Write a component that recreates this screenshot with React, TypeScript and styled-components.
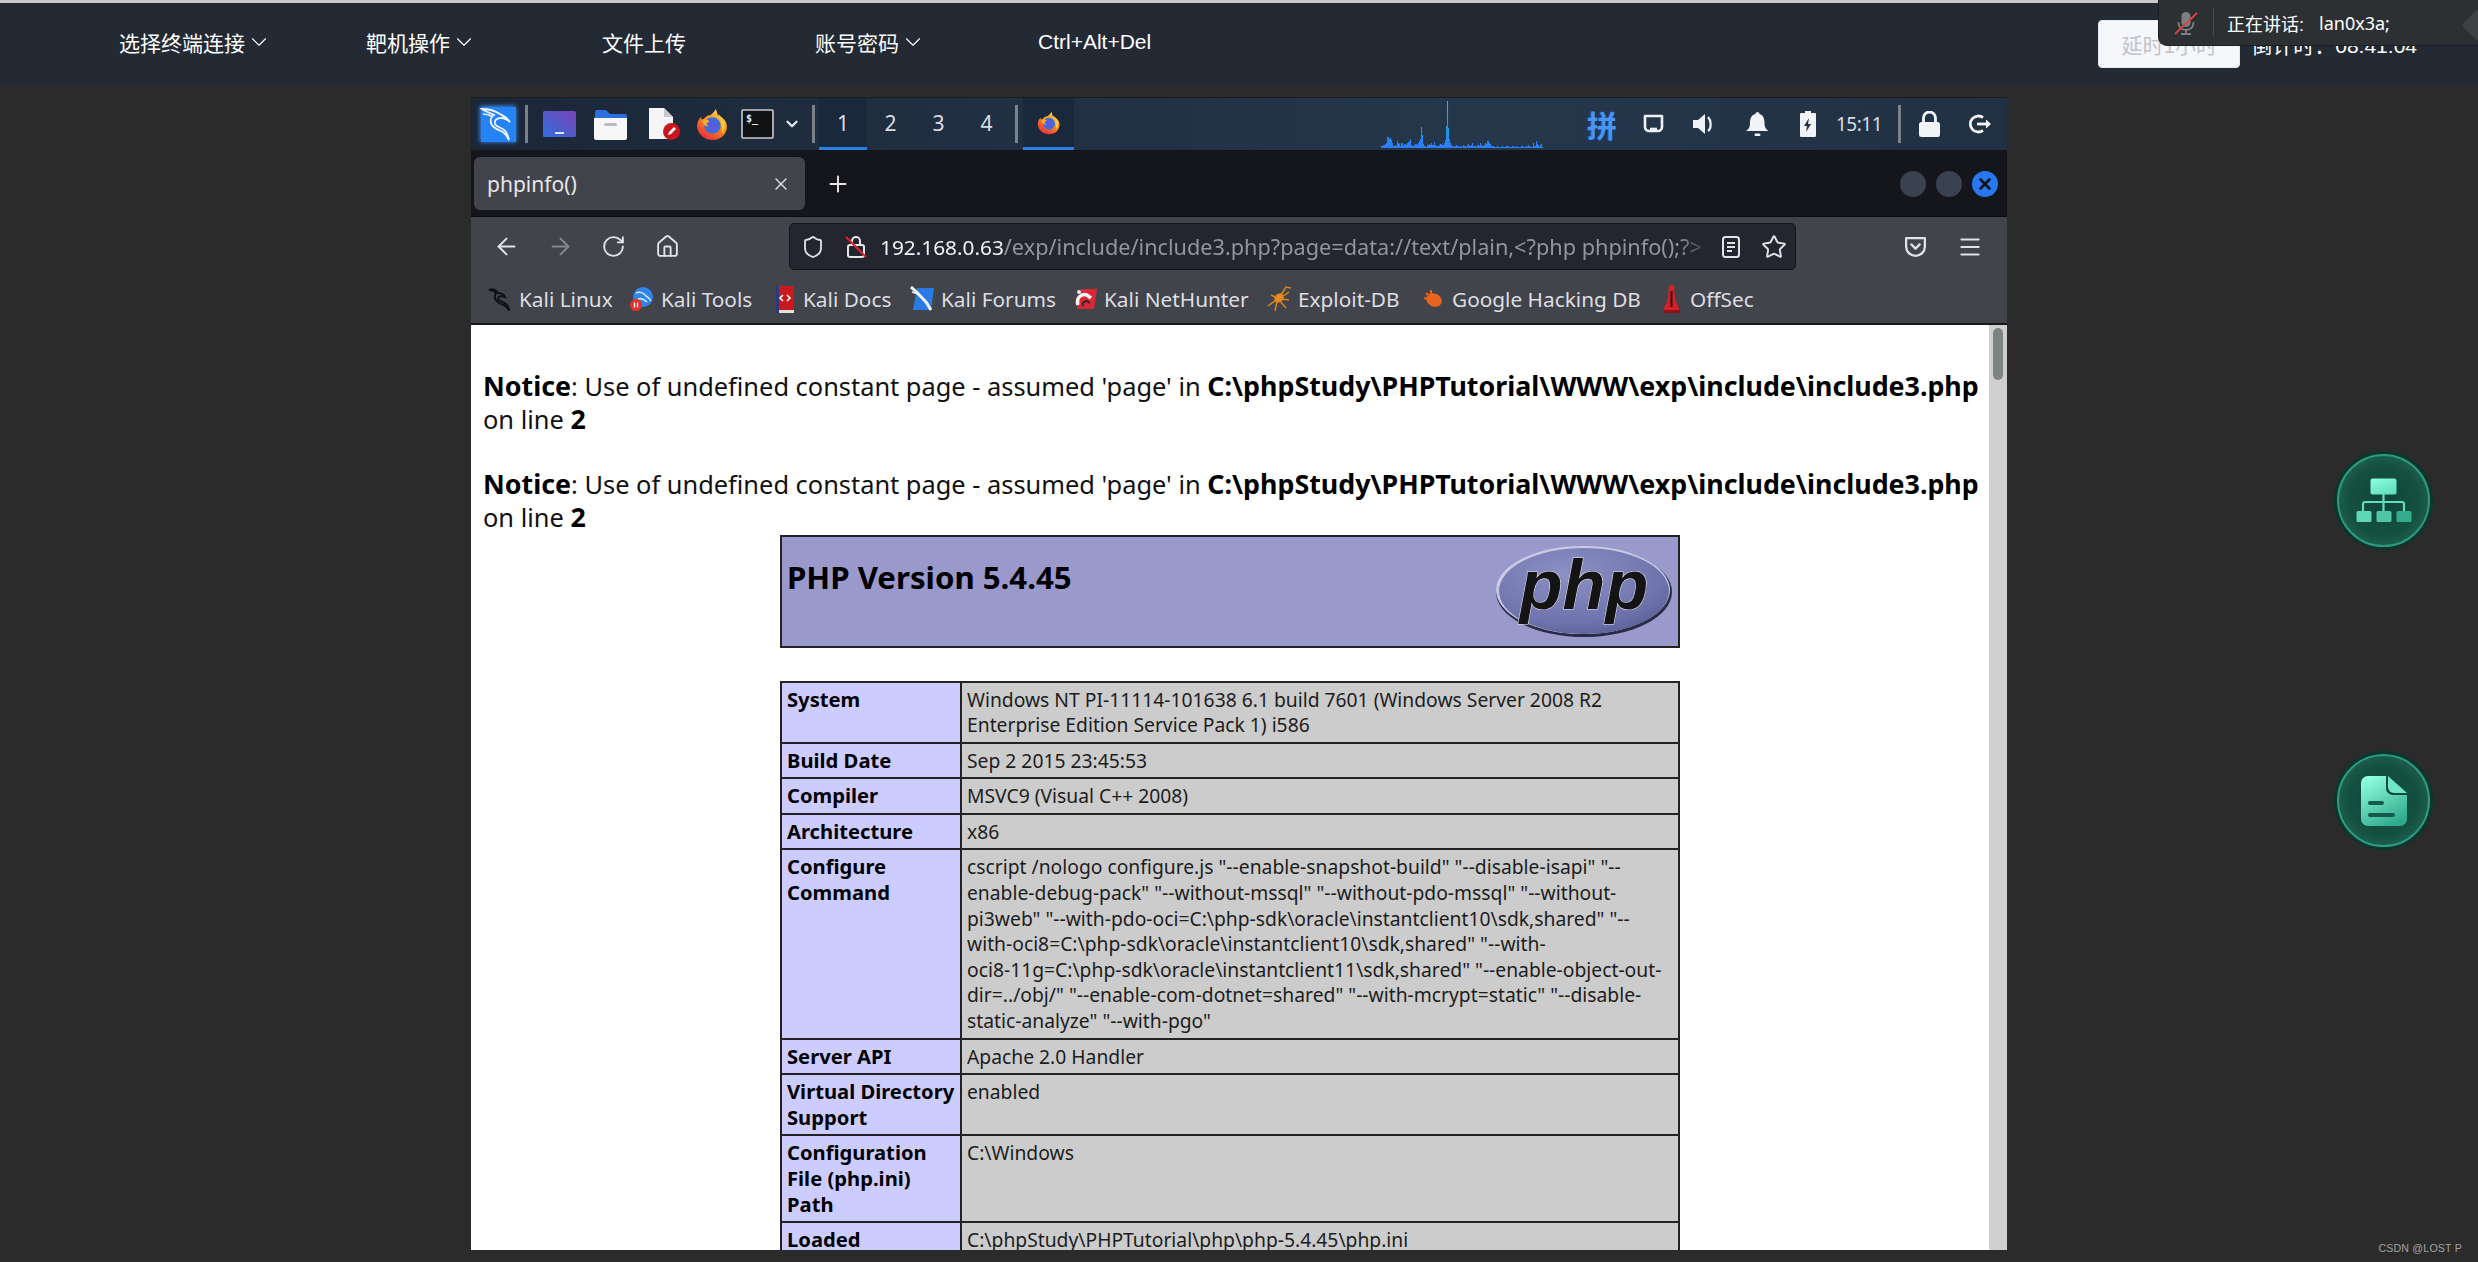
import React from "react";
import styled, { createGlobalStyle } from "styled-components";
import { ArrowLeft, ArrowRight, RotateCw, Home, Shield, Star, Menu, X, Plus, ChevronDown } from "lucide-react";

const UI = `"Noto Sans", "Noto Sans CJK SC", sans-serif`;
const CN = `"Liberation Sans", "Noto Sans CJK SC", sans-serif`;

const Global = createGlobalStyle`
  html, body { margin: 0; padding: 0; background: #2b2b2b; width: 2478px; height: 1262px; overflow: hidden; }
  * { box-sizing: border-box; }
`;

const Screen = styled.div`
  position: relative;
  width: 2478px;
  height: 1262px;
  background: #2b2b2b;
  overflow: hidden;
  font-family: ${UI};
`;

/* ---------- remote console bar ---------- */
const ConsoleBar = styled.header`
  height: 85px;
  background: #232a34;
  border-top: 3px solid #c9c9c9;
  display: flex;
  align-items: center;
  padding: 0 61px 0 119px;
  color: #fff;
  font-family: ${CN};
  font-size: 21px;
`;
const ConsoleItem = styled.div<{ $w: number }>`
  width: ${(p) => p.$w}px;
  display: flex;
  align-items: center;
  gap: 1px;
  white-space: nowrap;
  margin-top: -5px;
`;
const ConsoleRight = styled.div`
  margin-left: auto;
  display: flex;
  align-items: center;
  gap: 11px;
`;
const ExtendButton = styled.div`
  width: 142px;
  height: 48px;
  background: #f5f7fa;
  border: 1px solid #e4e7ed;
  border-radius: 4px;
  color: #c0c4cc;
  display: flex;
  align-items: center;
  justify-content: center;
  white-space: nowrap;
`;
const Countdown = styled.div`
  white-space: nowrap;
`;
const Toast = styled.aside`
  position: absolute;
  top: 0;
  right: 0;
  width: 320px;
  height: 46px;
  background: #2d3033;
  border-bottom: 1px solid #1c1e20;
  border-left: 1px solid #1c1e20;
  border-bottom-left-radius: 9px;
  display: flex;
  align-items: center;
  padding-left: 14px;
  overflow: hidden;
  color: #fff;
  font-family: ${CN};
  font-size: 18px;
  white-space: nowrap;
`;
const ToastDivider = styled.div`
  width: 1px;
  height: 29px;
  background: #45484b;
  margin: 0 13px 0 14px;
`;
const ToastName = styled.span`
  margin-left: 15px;
  font-family: "Noto Sans", sans-serif;
`;
const ToastDiamond = styled.div`
  position: absolute;
  right: -10px;
  top: 14px;
  width: 22px;
  height: 22px;
  background: #3e4144;
  border-radius: 3px;
  transform: rotate(45deg);
`;

/* ---------- remote desktop ---------- */
const RemoteRow = styled.main`
  padding: 12px 0 0 471px;
`;
const Remote = styled.section`
  width: 1536px;
  height: 1153px;
  display: flex;
  flex-direction: column;
  overflow: hidden;
  background: #fff;
`;

const Panel = styled.div`
  height: 53px;
  flex: none;
  background: linear-gradient(90deg, #1b2737 0%, #223245 45%, #25374b 65%, #213144 100%);
  border-top: 1px solid #1a1d22;
  display: flex;
  align-items: center;
  color: #e8ecf2;
`;
const PanelSlot = styled.div<{ $w: number }>`
  width: ${(p) => p.$w}px;
  height: 100%;
  flex: none;
  display: flex;
  align-items: center;
  justify-content: center;
`;
const PanelSep = styled.div<{ $mx?: number }>`
  width: 3px;
  height: 38px;
  flex: none;
  background: #8a9097;
  margin: 0 ${(p) => p.$mx ?? 4}px;
  opacity: 0.85;
`;
const Workspace = styled.div<{ $w: number; $active?: boolean }>`
  width: ${(p) => p.$w}px;
  height: 100%;
  flex: none;
  display: flex;
  align-items: center;
  justify-content: center;
  font-size: 21px;
  color: #d8dde4;
  background: ${(p) => (p.$active ? "#19283a" : "transparent")};
  border-bottom: 3px solid ${(p) => (p.$active ? "#2b7fe8" : "transparent")};
`;
const Clock = styled.div`
  width: 56px;
  flex: none;
  font-size: 19px;
  color: #d6dce4;
  letter-spacing: -0.5px;
  text-align: left;
`;
const Pinyin = styled.div`
  font-family: "Noto Sans CJK SC", sans-serif;
  font-weight: 700;
  font-size: 30px;
  line-height: 1;
  color: #4a96ee;
  text-shadow: 1px 1px 0 #123a80, -1px 0 0 #1c4e9e;
`;

/* ---------- firefox ---------- */
const TabBar = styled.div`
  height: 67px;
  flex: none;
  background: #15161b;
  display: flex;
  align-items: flex-start;
  padding: 7px 0 0 3px;
  border-bottom: 1px solid #0c0d10;
`;
const Tab = styled.div`
  width: 331px;
  height: 53px;
  background: #42444c;
  border-radius: 6px;
  display: flex;
  align-items: center;
  justify-content: space-between;
  padding: 0 14px 0 13px;
  color: #e6e6e8;
  font-size: 21px;
`;
const TabPlus = styled.div`
  width: 66px;
  height: 53px;
  display: flex;
  align-items: center;
  justify-content: center;
  color: #e6e6e8;
`;
const WindowButtons = styled.div`
  margin-left: auto;
  height: 53px;
  display: flex;
  align-items: center;
  gap: 10px;
  padding-right: 9px;
`;
const WindowDot = styled.div<{ $close?: boolean }>`
  width: 26px;
  height: 26px;
  border-radius: 50%;
  background: ${(p) => (p.$close ? "#2777f0" : "#3a4252")};
  display: flex;
  align-items: center;
  justify-content: center;
  color: #10141c;
`;
const NavBar = styled.div`
  height: 55px;
  flex: none;
  background: #42444c;
  display: flex;
  align-items: center;
  padding: 4px 0 0 9px;
  color: #e2e2e6;
`;
const NavBtn = styled.div<{ $w?: number; $dim?: boolean; $ml?: number }>`
  width: ${(p) => p.$w ?? 53.5}px;
  margin-left: ${(p) => p.$ml ?? 0}px;
  flex: none;
  display: flex;
  align-items: center;
  justify-content: center;
  color: ${(p) => (p.$dim ? "#85878d" : "#e2e2e6")};
`;
const UrlBar = styled.div`
  width: 1007px;
  height: 47px;
  margin-left: 95px;
  background: #23252f;
  border: 1px solid #14151a;
  border-radius: 5px;
  display: flex;
  align-items: center;
  padding-left: 4px;
  flex: none;
`;
const UrlText = styled.div`
  width: 832px;
  flex: none;
  overflow: hidden;
  white-space: nowrap;
  font-size: 21.7px;
  color: #93959d;
  -webkit-mask-image: linear-gradient(90deg, #000 96%, transparent 100%);
  mask-image: linear-gradient(90deg, #000 96%, transparent 100%);
`;
const UrlHost = styled.span`
  font-size: 20.8px;
  color: #f2f2f4;
`;
const BookmarkBar = styled.div`
  height: 53px;
  flex: none;
  background: #42444c;
  border-bottom: 2px solid #17181c;
  display: flex;
  align-items: center;
  padding: 3px 0 0 17px;
`;
const Bookmark = styled.div<{ $w: number }>`
  width: ${(p) => p.$w}px;
  flex: none;
  display: flex;
  align-items: center;
  color: #dedee2;
  font-size: 20.8px;
  white-space: nowrap;
`;
const BookmarkIcon = styled.span<{ $w: number }>`
  width: ${(p) => p.$w}px;
  flex: none;
  display: flex;
  align-items: center;
`;

/* ---------- page ---------- */
const PageRow = styled.div`
  flex: 1;
  min-height: 0;
  display: flex;
  background: #fff;
`;
const PageBody = styled.div`
  flex: 1;
  min-width: 0;
  overflow: hidden;
  padding: 45px 5px 0 12px;
  color: #111;
  font-size: 25.4px;
  line-height: 32.7px;
`;
const Notice = styled.div<{ $gap?: boolean }>`
  margin-bottom: ${(p) => (p.$gap ? 32.7 : 0)}px;
  b { color: #000; font-weight: 700; font-size: 26.8px; line-height: 1; }
`;
const InfoTable = styled.table`
  width: 900px;
  margin: 0 0 0 297px;
  border-collapse: collapse;
  table-layout: fixed;
  font-size: 19.3px;
  line-height: 25.6px;
`;
const HeaderTable = styled(InfoTable)`
  margin-bottom: 33px;
  margin-top: 1px;
`;
const HeaderCell = styled.td`
  height: 111px;
  background: #9999cc;
  border: 2px solid #222;
  padding: 4px 5px;
  vertical-align: top;
`;
const HeaderInner = styled.div`
  position: relative;
  height: 100%;
`;
const Title = styled.h1`
  margin: 0;
  padding-top: 18px;
  font-size: 31.2px;
  line-height: 36px;
  font-weight: 700;
  color: #000;
`;
const PhpLogo = styled.svg`
  position: absolute;
  right: 0;
  top: 3px;
`;
const LabelCell = styled.td`
  width: 180px;
  background: #ccccff;
  border: 2px solid #222;
  padding: 4px 5px;
  font-size: 20.2px;
  font-weight: 700;
  color: #000;
  vertical-align: top;
  white-space: pre-line;
`;
const ValueCell = styled.td`
  background: #cccccc;
  border: 2px solid #222;
  padding: 4px 5px;
  color: #1c1c1c;
  vertical-align: top;
  white-space: pre-line;
`;
const ScrollTrack = styled.div`
  width: 18px;
  flex: none;
  background: #cfcfcf;
  padding: 3px 4px 0;
`;
const ScrollThumb = styled.div`
  height: 52px;
  background: #7e8484;
  border-radius: 5px;
`;

/* ---------- overlays ---------- */
const FloatButton = styled.div<{ $top: number }>`
  position: absolute;
  left: 2337px;
  top: ${(p) => p.$top}px;
  width: 93px;
  height: 93px;
  border-radius: 50%;
  background: radial-gradient(circle at 50% 50%, #0f4438 0%, #14503f 55%, #2a6e5c 95%);
  border: 2px solid #2b9a80;
  box-shadow: 0 0 0 3px #0a362b;
  display: flex;
  align-items: center;
  justify-content: center;
`;
const Watermark = styled.div`
  position: absolute;
  right: 16px;
  bottom: 8px;
  font-family: "Liberation Sans", sans-serif;
  font-size: 10.6px;
  color: #a3a3a3;
  letter-spacing: 0.2px;
`;

/* ---------- drawings ---------- */
const Firefox = ({ s }: { s: number }) => (
  <svg width={s} height={s} viewBox="0 0 32 32">
    <defs>
      <linearGradient id="ffa" x1="0.8" y1="0" x2="0.2" y2="1">
        <stop offset="0" stopColor="#ffe14a" />
        <stop offset="0.45" stopColor="#ff8a1e" />
        <stop offset="1" stopColor="#e5273f" />
      </linearGradient>
    </defs>
    <path d="M19 1c2 3 1 5 3 7 4 1 8 5 8 10 0 8-6 13-14 13S2 26 1 18c0-4 2-8 4-9 0 2 1 3 2 3 1-3 4-5 7-5 2-2 4-3 5-6z" fill="url(#ffa)" />
    <circle cx="16" cy="17" r="8" fill="#3a6fe0" />
    <circle cx="16" cy="17" r="5" fill="#6f4fd8" opacity=".55" />
    <path d="M6 11c3 0 5 0 7 2l-3 2 2 3c-3 0-6-2-6-7z" fill="#ffb02a" />
    <path d="M21 6c4 2 7 6 7 11 0 3-1 6-3 8 1-7-1-14-4-19z" fill="#ffc83a" />
  </svg>
);
const KaliLogo = () => (
  <svg width="46" height="46" viewBox="0 0 46 46">
    <defs>
      <filter id="kglow" x="-30%" y="-30%" width="160%" height="160%"><feGaussianBlur stdDeviation="2.2" /></filter>
    </defs>
    <rect x="5" y="5" width="36" height="36" rx="1" fill="#3f8cff" filter="url(#kglow)" />
    <rect x="6" y="6" width="35" height="35" fill="#2683f6" />
    <path d="M7 8c6 0 12 1 18 5 3 2 7 3 10 8-3-3-6-4-9-4-4 0-7 2-6 6 1 3 6 3 9 6 3 2 4 6 5 10-2-4-4-7-8-9-4-2-9-3-10-8-1-4 1-7 3-8-3-2-8-3-12-6z" fill="none" stroke="#f2f7ff" strokeWidth="1.8" />
    <path d="M8 13c4 0 7 1 10 3" fill="none" stroke="#f2f7ff" strokeWidth="1.6" />
  </svg>
);
const ScreenIcon = () => (
  <svg width="33" height="26" viewBox="0 0 33 26">
    <defs>
      <linearGradient id="scr" x1="0" y1="1" x2="1" y2="0">
        <stop offset="0" stopColor="#2f6fe0" />
        <stop offset="1" stopColor="#7a43b4" />
      </linearGradient>
    </defs>
    <rect width="33" height="26" rx="1.5" fill="url(#scr)" />
    <rect x="12" y="21" width="9" height="2" fill="#e0e6f4" />
  </svg>
);
const FolderIcon = () => (
  <svg width="33" height="31" viewBox="0 0 33 31">
    <path d="M1 3a2 2 0 0 1 2-2h9l4 4h15a2 2 0 0 1 2 2v6H1z" fill="#2a70dc" />
    <path d="M0 9h33v20a2 2 0 0 1-2 2H2a2 2 0 0 1-2-2z" fill="#f6f6f7" />
    <rect x="10" y="14" width="13" height="3" rx="1.5" fill="#b8bcc4" />
  </svg>
);
const FileIcon = () => (
  <svg width="32" height="33" viewBox="0 0 32 33">
    <path d="M1 0h15l9 9v22H1z" fill="#f5f5f6" />
    <path d="M16 0l9 9h-9z" fill="#c6c8cc" />
    <circle cx="23.5" cy="23.5" r="8.5" fill="#c9171e" />
    <path d="M20 27l1-3 5-5 2 2-5 5z" fill="#fff" />
  </svg>
);
const TerminalIcon = () => (
  <svg width="33" height="30" viewBox="0 0 33 30">
    <rect x="1" y="1" width="31" height="28" rx="1" fill="#111214" stroke="#c9ccd2" strokeWidth="1.6" />
    <text x="5" y="13" fontFamily="DejaVu Sans Mono, monospace" fontSize="10" fontWeight="700" fill="#e8e8e8">$_</text>
  </svg>
);
const Spectrum = () => {
  const h = [2,2,3,3,4,5,11,11,9,10,8,5,2,2,3,2,7,5,4,2,5,5,2,4,4,3,5,6,7,9,3,2,2,3,4,4,3,5,7,9,21,13,4,2,2,1,3,3,4,3,5,3,3,6,3,2,2,2,3,4,4,3,3,5,8,22,47,20,9,5,3,2,2,1,2,3,2,2,1,2,2,1,3,2,2,1,3,4,2,2,3,5,2,2,2,1,3,3,2,5,3,2,2,3,5,4,7,7,5,4,2,2,2,1,1,1,2,1,1,1,1,2,1,1,1,2,2,2,1,1,1,2,2,1,1,2,1,1,1,1,2,2,1,1,2,1,2,3,2,1,1,1,5,2,2,7,4,3,1,3,4,1];
  return (
    <svg width="191" height="47" viewBox="0 0 191 47">
      <defs>
        <linearGradient id="spec" x1="0" y1="0" x2="0" y2="47" gradientUnits="userSpaceOnUse">
          <stop offset="0" stopColor="#12cdbb" />
          <stop offset="0.5" stopColor="#14a4d8" />
          <stop offset="0.8" stopColor="#2187f5" />
          <stop offset="1" stopColor="#2f7cff" />
        </linearGradient>
      </defs>
      {h.map((v, i) => (
        <rect key={i} x={i} y={47 - v} width="1.05" height={v} fill="url(#spec)" />
      ))}
    </svg>
  );
};
const PocketIcon = ({ c = "#eef1f5", s = 24 }: { c?: string; s?: number }) => (
  <svg width={s} height={s} viewBox="0 0 24 24" fill="none" stroke={c} strokeWidth="2.2">
    <path d="M3 4h18v8a9 9 0 0 1-18 0z" strokeLinejoin="round" />
    <path d="M8 10l4 4 4-4" strokeLinecap="round" strokeLinejoin="round" />
  </svg>
);
const MutedMic = () => (
  <svg width="26" height="26" viewBox="0 0 26 26">
    <rect x="8.500" y="2" width="9" height="15" rx="4.500" fill="#7d8083" />
    <path d="M5.500 12c0 5 3 8 7.500 8s7.500-3 7.500-8" fill="none" stroke="#7d8083" strokeWidth="1.800" />
    <path d="M13 20v3M8 24h10" stroke="#7d8083" strokeWidth="1.800" />
    <path d="M2 24L24 3" stroke="#d8433c" strokeWidth="1.800" />
  </svg>
);
const EthernetIcon = () => (
  <svg width="21" height="20" viewBox="0 0 21 20" fill="none" stroke="#eef1f5" strokeWidth="2.6">
    <path d="M2 2h17v11a4 4 0 0 1-4 4H6a4 4 0 0 1-4-4z" strokeLinejoin="round" />
    <path d="M7 15h7" />
  </svg>
);
const SpeakerIcon = () => (
  <svg width="24" height="24" viewBox="0 0 24 24">
    <path d="M1 8h5l7-6v20l-7-6H1z" fill="#eef1f5" />
    <path d="M16 5c3 3 4 11 0 14" fill="none" stroke="#eef1f5" strokeWidth="2.2" />
  </svg>
);
const BellIcon = () => (
  <svg width="23" height="26" viewBox="0 0 23 26">
    <path d="M11.500 1c1.200 0 2 1 2 2 4 1 5 5 5 9 0 4 1 6 4 8H0c3-2 4-4 4-8 0-4 1-8 5.500-9 0-1 .8-2 2-2z" fill="#f2f4f7" />
    <rect x="8.500" y="22.500" width="6" height="2.500" rx="1.200" fill="#f2f4f7" />
  </svg>
);
const BatteryIcon = () => (
  <svg width="16" height="26" viewBox="0 0 16 26">
    <path d="M5 0h6v2h4a1 1 0 0 1 1 1v22a1 1 0 0 1-1 1H1a1 1 0 0 1-1-1V3a1 1 0 0 1 1-1h4z" fill="#f2f4f7" />
    <path d="M9 7l-5 8h3l-1 6 5-8H8z" fill="#1f2e40" />
  </svg>
);
const PadlockIcon = () => (
  <svg width="21" height="26" viewBox="0 0 21 26">
    <path d="M4.500 12V7a6 6 0 0 1 12 0v5" fill="none" stroke="#f2f4f7" strokeWidth="2.800" />
    <rect y="11" width="21" height="15" rx="2.500" fill="#f2f4f7" />
  </svg>
);
const LogoutIcon = () => (
  <svg width="24" height="22" viewBox="0 0 24 22" fill="none" stroke="#f2f4f7" strokeWidth="2.800">
    <path d="M15 4.500a8 8 0 1 0 0 13" />
    <path d="M9 11h11" />
    <path d="M18 6.500l5 4.500-5 4.500z" fill="#f2f4f7" stroke="none" />
  </svg>
);
const InsecureLock = () => (
  <svg width="24" height="26" viewBox="0 0 24 26" fill="none">
    <path d="M8 11V7a4 4 0 0 1 8 0v4" stroke="#e6e6ea" strokeWidth="2" />
    <rect x="4" y="11" width="16" height="12" rx="2" stroke="#e6e6ea" strokeWidth="2" />
    <path d="M2 3l20 20" stroke="#e0222e" strokeWidth="2" />
  </svg>
);
const ReaderIcon = () => (
  <svg width="20" height="24" viewBox="0 0 20 24" fill="none" stroke="#e2e2e6" strokeWidth="2">
    <rect x="2" y="2" width="16" height="20" rx="2.500" />
    <path d="M6 8h8M6 12h8M6 16h5" />
  </svg>
);
const DragonBm = () => (
  <svg width="25" height="24" viewBox="0 0 25 24" fill="none" stroke="#101114" strokeWidth="2">
    <path d="M1 3c4-2 7 0 9 3 3 0 6 2 7 4-3-1-6-1-7 1-1 3 5 3 8 6 2 2 3 4 3 6-2-3-4-5-8-6-4-2-7-4-6-8 0-2 1-3 2-3-2-2-5-3-8-3z" />
  </svg>
);
const ToolsBm = () => (
  <svg width="23" height="26" viewBox="0 0 23 26">
    <circle cx="13" cy="11" r="10" fill="#2f86ea" />
    <path d="M6 7c4-2 8 0 10 3 2 1 4 3 5 5M8 13c3-1 6 0 9 3" stroke="#dbe9fb" strokeWidth="1.500" fill="none" />
    <circle cx="6" cy="19" r="6" fill="#e8302c" />
    <path d="M4.500 16.500v5M7.500 16.500v5" stroke="#fff" strokeWidth="1.300" />
  </svg>
);
const DocsBm = () => (
  <svg width="20" height="27" viewBox="0 0 20 27">
    <rect x="1" y="0" width="18" height="25" fill="#c9191e" />
    <rect x="1" y="24" width="18" height="3" fill="#e8e0d8" />
    <rect x="1" y="0" width="3" height="27" fill="#2a3a7a" />
    <path d="M8 9l-3 3 3 3M12 9l3 3-3 3" stroke="#fff" strokeWidth="1.600" fill="none" />
  </svg>
);
const ForumsBm = () => (
  <svg width="24" height="26" viewBox="0 0 24 26">
    <path d="M7 2h17l-3 22H3z" fill="#2b7be4" />
    <path d="M1 1c5 4 10 10 15 15l5 8" stroke="#f1f3f6" strokeWidth="3" fill="none" />
    <path d="M2 6l6 2" stroke="#f1f3f6" strokeWidth="1.500" />
  </svg>
);
const HunterBm = () => (
  <svg width="24" height="24" viewBox="0 0 24 24">
    <path d="M8 2h16l-3 20H4z" fill="#d92936" />
    <path d="M5 18c-2-7 3-12 9-10l4 3" stroke="#f3f3f3" strokeWidth="3.500" fill="none" />
    <path d="M10 19c-1-3 1-5 4-5l3 2" stroke="#2a2a2f" strokeWidth="2" fill="none" />
    <circle cx="6" cy="5" r="2" fill="#e9e9ea" />
  </svg>
);
const SpiderBm = () => (
  <svg width="25" height="26" viewBox="0 0 25 26" fill="none" stroke="#d98520" strokeWidth="1.500">
    <ellipse cx="12" cy="12" rx="4.500" ry="3.500" fill="#e88e22" transform="rotate(-40 12 12)" />
    <path d="M14 9L19 1l5 1M15 11l7-5M15 13l7 1M13 15l6 7M10 15L8 25M9 14L1 20M8 11L4 9" />
  </svg>
);
const BugBm = () => (
  <svg width="20" height="20" viewBox="0 0 20 20">
    <ellipse cx="11" cy="11" rx="8" ry="6.500" fill="#e8641e" transform="rotate(25 11 11)" />
    <path d="M3 4l4 3M8 1v5M1 9l4 1" stroke="#e8641e" strokeWidth="2" />
  </svg>
);
const OffSecBm = () => (
  <svg width="19" height="28" viewBox="0 0 19 28">
    <path d="M7 0h5l1 14 5 12H1l5-12z" fill="#d71f25" />
    <path d="M9.500 6v16" stroke="#2a1012" strokeWidth="2" />
    <rect x="1" y="25" width="17" height="3" fill="#8f1318" />
  </svg>
);
const NetIcon = () => (
  <svg width="56" height="46" viewBox="0 0 56 46">
    <defs>
      <linearGradient id="g1" x1="0" y1="0" x2="0.7" y2="1">
        <stop offset="0" stopColor="#8fffe0" />
        <stop offset="1" stopColor="#5fe0bf" />
      </linearGradient>
    </defs>
    <rect x="14.500" y="0.500" width="26" height="16" rx="2" fill="url(#g1)" />
    <path d="M27.500 16v19M7 35v-9a2 2 0 0 1 2-2h37a2 2 0 0 1 2 2v9" fill="none" stroke="#63dcbb" strokeWidth="2.200" />
    <rect x="0.500" y="33" width="15" height="11" rx="1.500" fill="#5fd7b7" />
    <rect x="20.500" y="33" width="15" height="11" rx="1.500" fill="#4fc6a7" />
    <rect x="40.500" y="33" width="15" height="11" rx="1.500" fill="#35ac8d" />
  </svg>
);
const DocIcon = () => (
  <svg width="46" height="50" viewBox="0 0 46 50">
    <defs>
      <linearGradient id="g2" x1="0.2" y1="0" x2="0.7" y2="1">
        <stop offset="0" stopColor="#8fffe0" />
        <stop offset="1" stopColor="#2fa98a" />
      </linearGradient>
    </defs>
    <path d="M7 0h18v12a7 7 0 0 0 7 7h14v24a7 7 0 0 1-7 7H7a7 7 0 0 1-7-7V7a7 7 0 0 1 7-7z" fill="url(#g2)" />
    <path d="M27 0l19 17H33a6 6 0 0 1-6-6z" fill="#6fe8c8" />
    <rect x="7" y="25" width="16" height="4" rx="2" fill="#155a49" />
    <rect x="7" y="37" width="27" height="4" rx="2" fill="#155a49" />
  </svg>
);

const rows: [string, string][] = [
  ["System", "Windows NT PI-11114-101638 6.1 build 7601 (Windows Server 2008 R2\nEnterprise Edition Service Pack 1) i586"],
  ["Build Date", "Sep 2 2015 23:45:53"],
  ["Compiler", "MSVC9 (Visual C++ 2008)"],
  ["Architecture", "x86"],
  ["Configure\nCommand", `cscript /nologo configure.js "--enable-snapshot-build" "--disable-isapi" "--\nenable-debug-pack" "--without-mssql" "--without-pdo-mssql" "--without-\npi3web" "--with-pdo-oci=C:\\php-sdk\\oracle\\instantclient10\\sdk,shared" "--\nwith-oci8=C:\\php-sdk\\oracle\\instantclient10\\sdk,shared" "--with-\noci8-11g=C:\\php-sdk\\oracle\\instantclient11\\sdk,shared" "--enable-object-out-\ndir=../obj/" "--enable-com-dotnet=shared" "--with-mcrypt=static" "--disable-\nstatic-analyze" "--with-pgo"`],
  ["Server API", "Apache 2.0 Handler"],
  ["Virtual Directory\nSupport", "enabled"],
  ["Configuration\nFile (php.ini)\nPath", "C:\\Windows"],
  ["Loaded\nConfiguration\nFile", "C:\\phpStudy\\PHPTutorial\\php\\php-5.4.45\\php.ini"],
];

const path = "C:\\phpStudy\\PHPTutorial\\WWW\\exp\\include\\include3.php";

const bookmarks: [React.ReactNode, string, number, number][] = [
  [<DragonBm />, "Kali Linux", 142, 31],
  [<ToolsBm />, "Kali Tools", 145, 31],
  [<DocsBm />, "Kali Docs", 135, 28],
  [<ForumsBm />, "Kali Forums", 163, 31],
  [<HunterBm />, "Kali NetHunter", 194, 31],
  [<SpiderBm />, "Exploit-DB", 156, 31],
  [<BugBm />, "Google Hacking DB", 239, 29],
  [<OffSecBm />, "OffSec", 100, 28],
];

export default function App() {
  return (
    <Screen>
      <Global />
      <ConsoleBar>
        <ConsoleItem $w={247}>选择终端连接<ChevronDown size={26} strokeWidth={1} /></ConsoleItem>
        <ConsoleItem $w={236}>靶机操作<ChevronDown size={26} strokeWidth={1} /></ConsoleItem>
        <ConsoleItem $w={213}>文件上传</ConsoleItem>
        <ConsoleItem $w={223}>账号密码<ChevronDown size={26} strokeWidth={1} /></ConsoleItem>
        <ConsoleItem $w={120}>Ctrl+Alt+Del</ConsoleItem>
        <ConsoleRight>
          <ExtendButton>延时1小时</ExtendButton>
          <Countdown>倒计时：08:41:04</Countdown>
        </ConsoleRight>
      </ConsoleBar>
      <Toast>
        <MutedMic />
        <ToastDivider />
        正在讲话:<ToastName>lan0x3a;</ToastName>
        <ToastDiamond />
      </Toast>

      <RemoteRow>
        <Remote>
          <Panel>
            <PanelSlot $w={53}><KaliLogo /></PanelSlot>
            <PanelSep $mx={1} />
            <PanelSlot $w={5} />
            <PanelSlot $w={51}><ScreenIcon /></PanelSlot>
            <PanelSlot $w={51}><FolderIcon /></PanelSlot>
            <PanelSlot $w={56}><FileIcon /></PanelSlot>
            <PanelSlot $w={40}><Firefox s={33} /></PanelSlot>
            <PanelSlot $w={51}><TerminalIcon /></PanelSlot>
            <PanelSlot $w={18}><ChevronDown size={20} strokeWidth={3} /></PanelSlot>
            <PanelSlot $w={7} />
            <PanelSep $mx={4} />
            <Workspace $w={48} $active>1</Workspace>
            <Workspace $w={47}>2</Workspace>
            <Workspace $w={49}>3</Workspace>
            <Workspace $w={47}>4</Workspace>
            <PanelSep $mx={5} />
            <Workspace $w={51} $active><Firefox s={24} /></Workspace>
            <PanelSlot $w={307} />
            <PanelSlot $w={191}><Spectrum /></PanelSlot>
            <PanelSlot $w={60}><Pinyin>拼</Pinyin></PanelSlot>
            <PanelSlot $w={42}><EthernetIcon /></PanelSlot>
            <PanelSlot $w={60}><SpeakerIcon /></PanelSlot>
            <PanelSlot $w={46}><BellIcon /></PanelSlot>
            <PanelSlot $w={56}><BatteryIcon /></PanelSlot>
            <Clock>15:11</Clock>
            <PanelSep $mx={6} />
            <PanelSlot $w={44}><PadlockIcon /></PanelSlot>
            <PanelSlot $w={58}><LogoutIcon /></PanelSlot>
          </Panel>

          <TabBar>
            <Tab>phpinfo()<X size={20} strokeWidth={1.6} /></Tab>
            <TabPlus><Plus size={26} strokeWidth={1.8} /></TabPlus>
            <WindowButtons>
              <WindowDot />
              <WindowDot />
              <WindowDot $close><X size={18} strokeWidth={3.500} /></WindowDot>
            </WindowButtons>
          </TabBar>

          <NavBar>
            <NavBtn><ArrowLeft size={27} strokeWidth={1.8} /></NavBtn>
            <NavBtn $dim><ArrowRight size={27} strokeWidth={1.8} /></NavBtn>
            <NavBtn><RotateCw size={25} strokeWidth={1.8} /></NavBtn>
            <NavBtn><Home size={25} strokeWidth={1.8} /></NavBtn>
            <UrlBar>
              <NavBtn $w={38}><Shield size={24} strokeWidth={1.8} /></NavBtn>
              <NavBtn $w={48}><InsecureLock /></NavBtn>
              <UrlText>
                <UrlHost>192.168.0.63</UrlHost>/exp/include/include3.php?page=data://text/plain,&lt;?php phpinfo();?&gt;
              </UrlText>
              <NavBtn $w={38}><ReaderIcon /></NavBtn>
              <NavBtn $w={48}><Star size={26} strokeWidth={1.8} /></NavBtn>
            </UrlBar>
            <NavBtn $w={46} $ml={96}><PocketIcon c="#e2e2e6" s={25} /></NavBtn>
            <NavBtn $w={26} $ml={19}><Menu size={26} strokeWidth={1.8} /></NavBtn>
          </NavBar>

          <BookmarkBar>
            {bookmarks.map(([icon, label, w, iw]) => (
              <Bookmark key={label} $w={w}>
                <BookmarkIcon $w={iw}>{icon}</BookmarkIcon>
                {label}
              </Bookmark>
            ))}
          </BookmarkBar>

          <PageRow>
            <PageBody>
              <Notice $gap>
                <b>Notice</b>: Use of undefined constant page - assumed 'page' in <b>{path}</b> on line <b>2</b>
              </Notice>
              <Notice>
                <b>Notice</b>: Use of undefined constant page - assumed 'page' in <b>{path}</b> on line <b>2</b>
              </Notice>
              <HeaderTable>
                <tbody>
                  <tr>
                    <HeaderCell>
                      <HeaderInner>
                        <Title>PHP Version 5.4.45</Title>
                        <PhpLogo width="178" height="94" viewBox="0 0 178 94">
                          <defs>
                            <radialGradient id="phpg" cx="0.4" cy="0.3" r="0.8">
                              <stop offset="0" stopColor="#8c90c4" />
                              <stop offset="0.7" stopColor="#6f74ad" />
                              <stop offset="1" stopColor="#555c92" />
                            </radialGradient>
                          </defs>
                          <ellipse cx="89" cy="48" rx="88" ry="45" fill="#2a2c45" />
                          <ellipse cx="88" cy="46" rx="87" ry="44" fill="#c9cbe2" />
                          <ellipse cx="89" cy="47" rx="85" ry="43" fill="url(#phpg)" />
                          <text x="89" y="65" textAnchor="middle" fontFamily="Liberation Sans, sans-serif" fontSize="70" fontWeight="700" fontStyle="italic" fill="#141414" stroke="#e8e8f2" strokeWidth="1" paintOrder="stroke">php</text>
                        </PhpLogo>
                      </HeaderInner>
                    </HeaderCell>
                  </tr>
                </tbody>
              </HeaderTable>
              <InfoTable>
                <tbody>
                  {rows.map(([k, v]) => (
                    <tr key={k}>
                      <LabelCell>{k}</LabelCell>
                      <ValueCell>{v}</ValueCell>
                    </tr>
                  ))}
                </tbody>
              </InfoTable>
            </PageBody>
            <ScrollTrack><ScrollThumb /></ScrollTrack>
          </PageRow>
        </Remote>
      </RemoteRow>

      <FloatButton $top={454}><NetIcon /></FloatButton>
      <FloatButton $top={754}><DocIcon /></FloatButton>
      <Watermark>CSDN @LOST P</Watermark>
    </Screen>
  );
}
